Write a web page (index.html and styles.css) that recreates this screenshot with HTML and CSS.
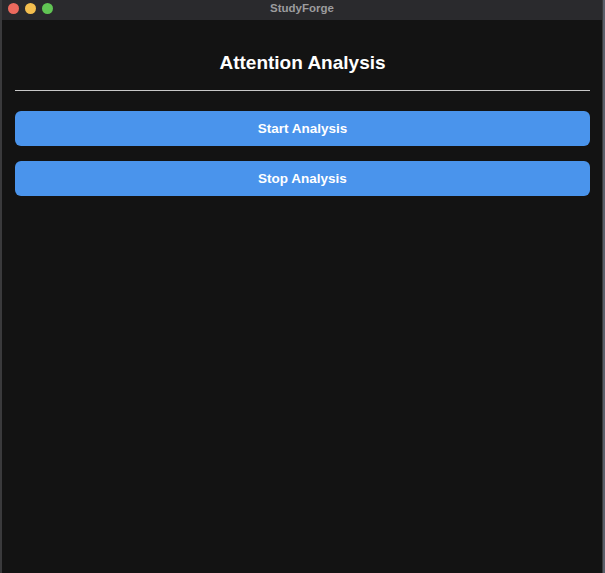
FILE: index.html
```html
<!DOCTYPE html>
<html>
<head>
<meta charset="utf-8">
<link rel="stylesheet" href="styles.css">
</head>
<body>
<div class="window">
  <div class="titlebar">
    <div class="lights">
      <span class="light red"></span>
      <span class="light yellow"></span>
      <span class="light green"></span>
    </div>
    <div class="title">StudyForge</div>
  </div>
  <div class="content">
    <h1 class="heading">Attention Analysis</h1>
    <hr class="divider">
    <button class="btn">Start Analysis</button>
    <button class="btn">Stop Analysis</button>
  </div>
</div>
<div class="edge"></div>
</body>
</html>
```
FILE: styles.css
```css
html, body {
  margin: 0;
  padding: 0;
  width: 605px;
  height: 573px;
  overflow: hidden;
  background: #2b2d33;
  font-family: "Liberation Sans", Arial, sans-serif;
}
body {
  display: flex;
}
.window {
  width: 600px;
  height: 573px;
  border-left: 2px solid #3a3a3c;
  border-right: 1px solid #3a3a3c;
  background: #131313;
  display: flex;
  flex-direction: column;
}
.edge {
  flex: 1;
  background: #5a5f6a;
}
.titlebar {
  height: 20px;
  background: #2a2a2d;
  position: relative;
  display: flex;
  align-items: center;
  justify-content: center;
}
.lights {
  position: absolute;
  left: 6px;
  top: 3px;
  display: flex;
  gap: 6px;
}
.light {
  width: 11px;
  height: 11px;
  border-radius: 50%;
  display: block;
}
.red { background: #ec6a5e; }
.yellow { background: #f4bf4f; }
.green { background: #61c554; }
.title {
  color: #9c9c9e;
  font-size: 11.5px;
  font-weight: bold;
  margin-top: -4px;
}
.content {
  padding: 0 12px 0 13px;
  display: flex;
  flex-direction: column;
}
.heading {
  margin: 31px 0 0 0;
  height: 24px;
  line-height: 24px;
  text-align: center;
  color: #ffffff;
  font-size: 19px;
  font-weight: bold;
}
.divider {
  margin: 15px 0 0 0;
  border: none;
  height: 1px;
  background: #c8c8c8;
}
.btn {
  margin-top: 20px;
  height: 35px;
  border: none;
  border-radius: 6px;
  background: #4a94ec;
  color: #ffffff;
  font-family: "Liberation Sans", Arial, sans-serif;
  font-size: 13.5px;
  font-weight: bold;
  padding: 0;
}
.btn + .btn {
  margin-top: 15px;
}
```
